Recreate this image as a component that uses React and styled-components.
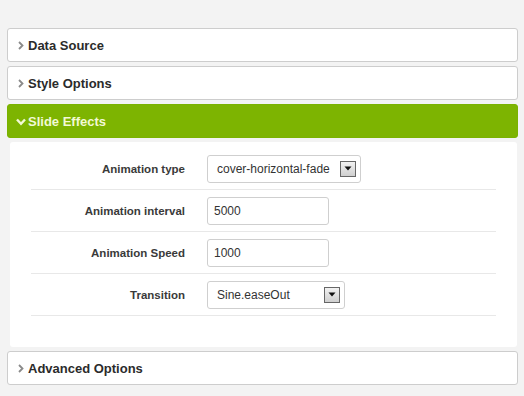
import React from 'react';
import styled, { createGlobalStyle } from 'styled-components';

const GlobalStyle = createGlobalStyle`
  html, body {
    margin: 0;
    padding: 0;
    background: #f3f3f3;
    font-family: 'Liberation Sans', Arial, sans-serif;
  }
`;

const sections = [
  { title: 'Data Source' },
  { title: 'Style Options' },
  { title: 'Slide Effects', open: true },
  { title: 'Advanced Options' },
];

const fields = [
  { label: 'Animation type', type: 'select', value: 'cover-horizontal-fade', width: 154 },
  { label: 'Animation interval', type: 'input', value: '5000', width: 122 },
  { label: 'Animation Speed', type: 'input', value: '1000', width: 122 },
  { label: 'Transition', type: 'select', value: 'Sine.easeOut', width: 138 },
];

function Chevron({ open }) {
  if (open) {
    return (
      <svg width="10" height="8" viewBox="0 0 10 8">
        <path d="M1 1.5 L5 5.8 L9 1.5" fill="none" stroke="#f2f9d6" strokeWidth="2.4" />
      </svg>
    );
  }
  return (
    <svg width="6" height="9" viewBox="0 0 6 9">
      <path d="M1 1 L4.5 4.5 L1 8" fill="none" stroke="#8a8a8a" strokeWidth="1.8" />
    </svg>
  );
}

function SelectBox({ value, width }) {
  return (
    <Select style={{ width }}>
      <span>{value}</span>
      <ArrowButton>
        <svg width="8" height="5" viewBox="0 0 8 5">
          <path d="M0.5 0.5 H7.5 L4 4.5 Z" fill="#111" />
        </svg>
      </ArrowButton>
    </Select>
  );
}

export default function App() {
  return (
    <Page>
      <GlobalStyle />
      {sections.map((s) => (
        <Section key={s.title}>
          <Header open={s.open}>
            <IconSlot><Chevron open={s.open} /></IconSlot>
            {s.title}
          </Header>
          {s.open && (
            <Body>
              {fields.map((f) => (
                <Row key={f.label}>
                  <Label>{f.label}</Label>
                  <div>
                    {f.type === 'select' ? (
                      <SelectBox value={f.value} width={f.width} />
                    ) : (
                      <Input style={{ width: f.width }} value={f.value} readOnly />
                    )}
                  </div>
                </Row>
              ))}
            </Body>
          )}
        </Section>
      ))}
    </Page>
  );
}

const Page = styled.div`
  width: 524px;
  height: 396px;
  box-sizing: border-box;
  padding: 28px 6px 0 7px;
  display: flex;
  flex-direction: column;
  gap: 4px;
`;

const Section = styled.div`
  display: flex;
  flex-direction: column;
`;

const Header = styled.div`
  height: 34px;
  box-sizing: border-box;
  display: flex;
  align-items: center;
  padding-left: 6px;
  border: 1px solid ${(p) => (p.open ? '#7ab200' : '#cdcdcd')};
  border-radius: 3px;
  background: ${(p) => (p.open ? '#7db401' : '#fff')};
  color: ${(p) => (p.open ? '#f2f9d6' : '#2b2b2b')};
  font-size: 13px;
  font-weight: bold;
`;

const IconSlot = styled.span`
  width: 14px;
  display: flex;
  align-items: center;
  justify-content: center;
  margin-top: 1px;
`;

const Body = styled.div`
  margin: 4px 1px 0 3px;
  padding: 6px 21px 31px 21px;
  background: #fff;
  border-radius: 3px;
`;

const Row = styled.div`
  display: grid;
  grid-template-columns: 154px 1fr;
  column-gap: 22px;
  align-items: center;
  height: 41px;
  border-bottom: 1px solid #e8e8e8;
`;

const Label = styled.div`
  text-align: right;
  font-size: 11.5px;
  font-weight: bold;
  color: #3a3a3a;
`;

const Input = styled.input`
  box-sizing: border-box;
  height: 28px;
  border: 1px solid #cfcfcf;
  border-radius: 3px;
  padding: 0 6px;
  font-family: 'Liberation Sans', Arial, sans-serif;
  font-size: 12px;
  color: #333;
  background: #fff;
  outline: none;
`;

const Select = styled.div`
  box-sizing: border-box;
  height: 28px;
  border: 1px solid #cfcfcf;
  border-radius: 3px;
  padding: 0 4px 0 9px;
  display: flex;
  align-items: center;
  justify-content: space-between;
  font-size: 12px;
  color: #333;
  background: #fff;
`;

const ArrowButton = styled.span`
  width: 16px;
  height: 16px;
  box-sizing: border-box;
  border: 1px solid #666;
  background: linear-gradient(#f2f2f2, #cfcfcf);
  display: flex;
  align-items: center;
  justify-content: center;
`;
